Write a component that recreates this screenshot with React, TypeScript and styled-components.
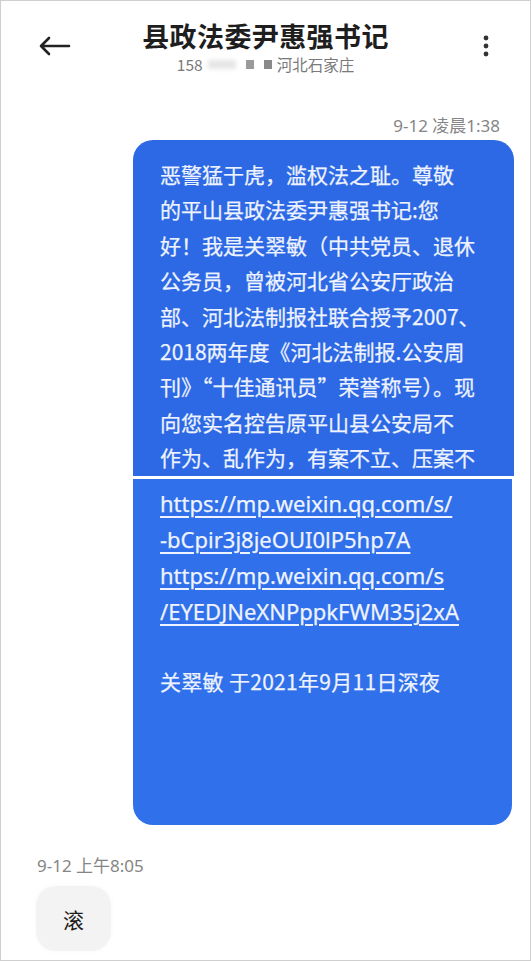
import styled, { createGlobalStyle } from "styled-components";

const Global = createGlobalStyle`
  html, body {
    margin: 0;
    padding: 0;
    background: #ffffff;
  }
  body {
    font-family: "Noto Sans CJK SC", "Noto Sans", sans-serif;
  }
`;

const Frame = styled.main`
  box-sizing: border-box;
  width: 531px;
  height: 961px;
  border: 1px solid #cfcfcf;
  background: #ffffff;
  display: flex;
  flex-direction: column;
  overflow: hidden;
`;

const Header = styled.header`
  display: grid;
  grid-template-columns: 90px 1fr 90px;
  align-items: start;
  padding-top: 18px;
  height: 115px;
  box-sizing: border-box;
`;

const BackButton = styled.div`
  padding: 17px 0 0 38px;
  line-height: 0;
`;

const MoreButton = styled.div`
  display: flex;
  justify-content: flex-end;
  padding: 16px 41px 0 0;
  line-height: 0;
`;

const TitleBlock = styled.div`
  display: flex;
  flex-direction: column;
  align-items: center;
`;

const Title = styled.h1`
  margin: 0;
  font-size: 27px;
  line-height: 34px;
  font-weight: 600;
  color: #1e1e1e;
  letter-spacing: 0.4px;
  white-space: nowrap;
`;

const Sub = styled.div`
  display: flex;
  align-items: center;
  margin-top: 1px;
  font-size: 15.5px;
  line-height: 20px;
  color: #7a7a7a;
`;

const Smudge = styled.span<{ $w: number; $tone: string }>`
  display: inline-block;
  width: ${(p) => p.$w}px;
  height: 9px;
  margin: 0 5px;
  background: ${(p) => p.$tone};
  filter: blur(${(p) => (p.$tone === "#e6e6e6" ? 2 : 0.6)}px);
`;

const Stamp = styled.div<{ $align: "left" | "right" }>`
  font-family: "Noto Sans", "Noto Sans CJK SC", sans-serif;
  font-size: 17px;
  line-height: 20px;
  color: #858585;
  text-align: ${(p) => p.$align};
  padding: ${(p) => (p.$align === "right" ? "0 30px 0 0" : "0 0 0 36px")};
`;

const Outgoing = styled.section`
  margin: 4px 0 0 132px;
  width: 381px;
  display: flex;
  flex-direction: column;
`;

const Part = styled.div<{ $top?: boolean }>`
  background: ${(p) => (p.$top ? "#2d69e4" : "#3070ea")};
  border-radius: ${(p) => (p.$top ? "20px 20px 0 0" : "0 0 20px 20px")};
  border-top: ${(p) => (p.$top ? "none" : "3px solid #ffffff")};
  margin-right: ${(p) => (p.$top ? "0" : "2px")};
  padding: ${(p) => (p.$top ? "17px 0 0 27px" : "6px 0 126px 27px")};
  color: #eef3ff;
  font-size: 21px;
  -webkit-text-stroke: 0.25px #eef3ff;
`;

const Line = styled.div`
  height: 35.4px;
  line-height: 35.4px;
  white-space: nowrap;
`;

const Link = styled.div`
  height: 36.3px;
  line-height: 36.3px;
  white-space: nowrap;
  font-family: "Noto Sans", "Noto Sans CJK SC", sans-serif;
  font-size: 22px;
  text-decoration: underline;
  text-underline-offset: 4px;
  text-decoration-thickness: 1.5px;
`;

const Sign = styled(Line)`
  letter-spacing: 0.3px;
`;

const Gap = styled.div`
  height: 34px;
`;

const Footer = styled.div`
  margin-top: 31px;
  display: flex;
  flex-direction: column;
  gap: 10px;
`;

const Incoming = styled.div`
  margin-left: 35px;
  width: 75px;
  height: 65px;
  border-radius: 20px;
  background: #f3f3f3;
  box-shadow: 0 0 6px rgba(0, 0, 0, 0.03);
  display: flex;
  align-items: center;
  justify-content: center;
  font-size: 21px;
  color: #1e1e1e;
`;

const topLines = [
  "恶警猛于虎，滥权法之耻。尊敬",
  "的平山县政法委尹惠强书记:您",
  "好！我是关翠敏（中共党员、退休",
  "公务员，曾被河北省公安厅政治",
  "部、河北法制报社联合授予2007、",
  "2018两年度《河北法制报.公安周",
  "刊》“十佳通讯员”荣誉称号）。现",
  "向您实名控告原平山县公安局不",
  "作为、乱作为，有案不立、压案不",
];

const links = [
  "https://mp.weixin.qq.com/s/",
  "-bCpir3j8jeOUI0lP5hp7A",
  "https://mp.weixin.qq.com/s",
  "/EYEDJNeXNPppkFWM35j2xA",
];

export default function App() {
  return (
    <>
      <Global />
      <Frame>
        <Header>
          <BackButton>
            <svg width="32" height="20" viewBox="0 0 32 20">
              <path
                d="M2 10 H30 M10 2 L2 10 L10 18"
                fill="none"
                stroke="#222"
                strokeWidth="2.6"
                strokeLinecap="round"
                strokeLinejoin="round"
              />
            </svg>
          </BackButton>
          <TitleBlock>
            <Title>县政法委尹惠强书记</Title>
            <Sub>
              <span>158</span>
              <Smudge $w={28} $tone="#e6e6e6" />
              <Smudge $w={8} $tone="#9a9a9a" />
              <Smudge $w={8} $tone="#8a8a8a" />
              <span>河北石家庄</span>
            </Sub>
          </TitleBlock>
          <MoreButton>
            <svg width="6" height="22" viewBox="0 0 6 22">
              <circle cx="3" cy="3" r="2.4" fill="#333" />
              <circle cx="3" cy="11" r="2.4" fill="#333" />
              <circle cx="3" cy="19" r="2.4" fill="#333" />
            </svg>
          </MoreButton>
        </Header>
        <Stamp $align="right">9-12 凌晨1:38</Stamp>
        <Outgoing>
          <Part $top>
            {topLines.map((t) => (
              <Line key={t}>{t}</Line>
            ))}
          </Part>
          <Part>
            {links.map((t) => (
              <Link key={t}>{t}</Link>
            ))}
            <Gap />
            <Sign>关翠敏 于2021年9月11日深夜</Sign>
          </Part>
        </Outgoing>
        <Footer>
          <Stamp $align="left">9-12 上午8:05</Stamp>
          <Incoming>滚</Incoming>
        </Footer>
      </Frame>
    </>
  );
}
